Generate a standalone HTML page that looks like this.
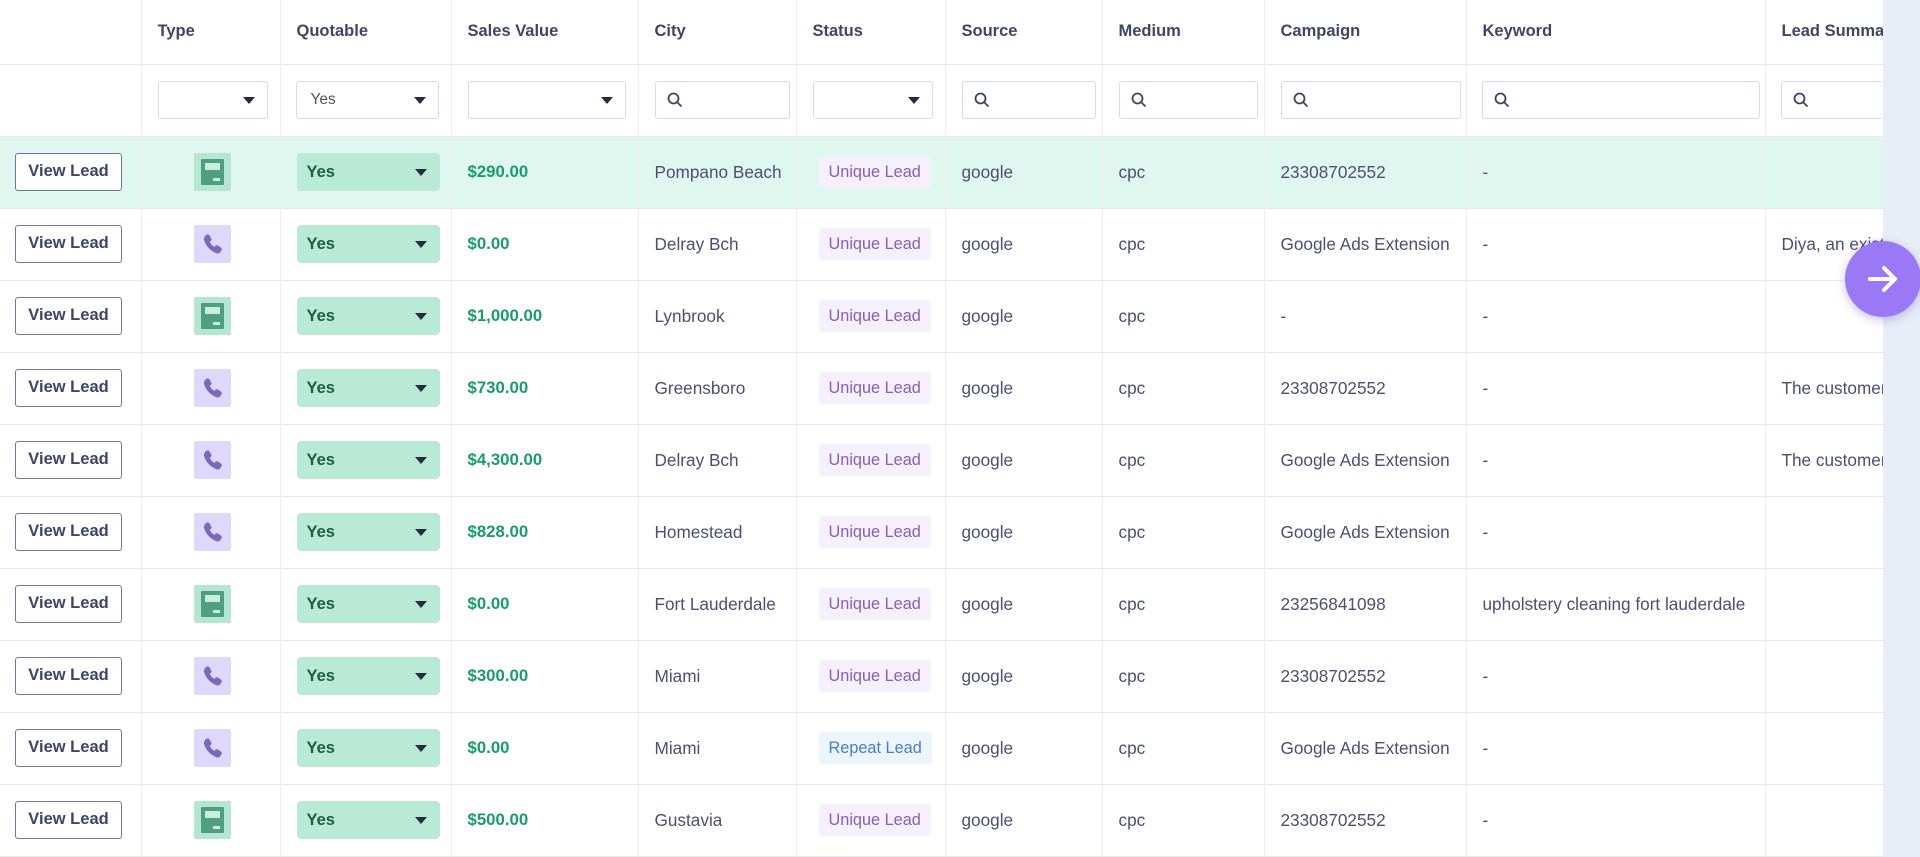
<!DOCTYPE html>
<html><head><meta charset="utf-8"><style>
*{box-sizing:border-box;margin:0;padding:0}
html,body{width:1920px;height:857px;overflow:hidden;background:#fff;font-family:"Liberation Sans",sans-serif}
.strip{position:absolute;left:1883px;top:0;width:37px;height:857px;background:#e7eef7}
table{position:absolute;left:0;top:0;border-collapse:collapse;table-layout:fixed;width:1883px}
td,th{border-bottom:1px solid #e6e9f0;border-right:1px solid #eceef3;padding:0 0 0 16px;text-align:left;white-space:nowrap;overflow:hidden;font-size:17.2px;color:#4a5072;vertical-align:middle}
th{height:64px;font-weight:bold;color:#3f4566;font-size:16.5px}
tr.f td{height:72px}
tr.r td{height:72px}
tr.hl td{background:#e0f7f0}
td.c0,th.c0{padding:0;box-shadow:6px 0 8px -6px rgba(0,0,0,.08)}
.vl{display:block;margin-left:15px;width:107px;height:38px;border:1.5px solid #6f7796;border-radius:3px;font-weight:bold;font-size:16.5px;color:#3d4466;text-align:center;line-height:35px;background:#fff}
.sel{height:38px;border:1.5px solid #d5daea;border-radius:3px;position:relative;background:#fff;font-size:15.5px;color:#555;line-height:35px;padding-left:14px}
.sel:after{content:"";position:absolute;right:12px;top:15px;border-left:6px solid transparent;border-right:6px solid transparent;border-top:7px solid #262a40}
.srch{height:38px;border:1.5px solid #d5daea;border-radius:3px;position:relative;background:#fff}
.srch svg{position:absolute;left:11px;top:10px}
.ysel{width:143px;height:38px;background:#b8ead6;border-radius:4px;position:relative;font-weight:bold;color:#1d5e45;font-size:16.5px;line-height:38px;padding-left:10px}
.ysel:after{content:"";position:absolute;right:13px;top:16px;border-left:6px solid transparent;border-right:6px solid transparent;border-top:7px solid #262a40}
.ic{display:block;margin-left:52px;width:37px;height:38px;border-radius:2px;position:relative}
.form{background:#b4e6d2}
.form i{position:absolute;left:7px;top:6px;width:23px;height:26px;background:#4f9e80;border-radius:1px}
.form i:before{content:"";position:absolute;left:4px;top:4px;width:15px;height:7px;background:#c8eedd}
.form i:after{content:"";position:absolute;left:12px;top:19px;width:7px;height:2.5px;background:#c8eedd}
.ph{background:#ddd8fc}
.ph svg{position:absolute;left:6px;top:7px}
.money{color:#1a9b68;font-weight:bold;font-size:16.8px}
.bd{display:inline-block;height:32px;line-height:32px;padding:0 10px;border-radius:3px;background:#f5f0fb;color:#8560b2;font-size:16.3px;margin-left:6px}
.bd.rp{background:#ecf4fc;color:#4b7db9}
.arrow{position:absolute;left:1845px;top:241px;width:76px;height:76px;border-radius:50%;background:#9b78f6;box-shadow:0 3px 10px rgba(80,60,160,.3)}
.arrow svg{position:absolute;left:21px;top:21px}
</style></head><body>
<div class="strip"></div>
<table>
<colgroup><col style="width:141px"><col style="width:139px"><col style="width:171px"><col style="width:187px"><col style="width:158px"><col style="width:149px"><col style="width:157px"><col style="width:162px"><col style="width:202px"><col style="width:299px"><col style="width:118px"></colgroup>
<tr><th class="c0"></th><th>Type</th><th>Quotable</th><th>Sales Value</th><th>City</th><th>Status</th><th>Source</th><th>Medium</th><th>Campaign</th><th>Keyword</th><th>Lead Summary</th></tr>
<tr class="f"><td class="c0"></td>
<td style="padding-left:16px;padding-right:12px"><div class="sel"></div></td>
<td style="padding-left:15px;padding-right:12px"><div class="sel">Yes</div></td>
<td style="padding-left:16px;padding-right:12px"><div class="sel"></div></td>
<td style="padding-left:16px;padding-right:6px"><div class="srch"><svg width="16" height="16" viewBox="0 0 16 16"><circle cx="6.5" cy="6.5" r="5" fill="none" stroke="#3d4466" stroke-width="1.8"/><path d="M10 10l4.5 4.5" stroke="#3d4466" stroke-width="1.8"/></svg></div></td>
<td style="padding-left:16px;padding-right:12px"><div class="sel"></div></td>
<td style="padding-left:16px;padding-right:6px"><div class="srch"><svg width="16" height="16" viewBox="0 0 16 16"><circle cx="6.5" cy="6.5" r="5" fill="none" stroke="#3d4466" stroke-width="1.8"/><path d="M10 10l4.5 4.5" stroke="#3d4466" stroke-width="1.8"/></svg></div></td>
<td style="padding-left:16px;padding-right:6px"><div class="srch"><svg width="16" height="16" viewBox="0 0 16 16"><circle cx="6.5" cy="6.5" r="5" fill="none" stroke="#3d4466" stroke-width="1.8"/><path d="M10 10l4.5 4.5" stroke="#3d4466" stroke-width="1.8"/></svg></div></td>
<td style="padding-left:16px;padding-right:5px"><div class="srch"><svg width="16" height="16" viewBox="0 0 16 16"><circle cx="6.5" cy="6.5" r="5" fill="none" stroke="#3d4466" stroke-width="1.8"/><path d="M10 10l4.5 4.5" stroke="#3d4466" stroke-width="1.8"/></svg></div></td>
<td style="padding-left:15px;padding-right:5px"><div class="srch"><svg width="16" height="16" viewBox="0 0 16 16"><circle cx="6.5" cy="6.5" r="5" fill="none" stroke="#3d4466" stroke-width="1.8"/><path d="M10 10l4.5 4.5" stroke="#3d4466" stroke-width="1.8"/></svg></div></td>
<td style="padding-left:15px;padding-right:0"><div class="srch" style="border-right:none"><svg width="16" height="16" viewBox="0 0 16 16"><circle cx="6.5" cy="6.5" r="5" fill="none" stroke="#3d4466" stroke-width="1.8"/><path d="M10 10l4.5 4.5" stroke="#3d4466" stroke-width="1.8"/></svg></div></td>
</tr>
<tr class="r hl"><td class="c0"><span class="vl">View Lead</span></td><td style="padding:0"><span class="ic form"><i></i></span></td><td><div class="ysel">Yes</div></td><td class="money">$290.00</td><td>Pompano Beach</td><td><span class="bd">Unique Lead</span></td><td>google</td><td>cpc</td><td>23308702552</td><td>-</td><td></td></tr>
<tr class="r"><td class="c0"><span class="vl">View Lead</span></td><td style="padding:0"><span class="ic ph"><svg width="25" height="25" viewBox="0 0 24 24"><path d="M6.6 2.5c.8-.5 1.8-.2 2.3.6l1.9 3.1c.4.7.3 1.6-.3 2.2l-1.2 1.1c.9 2 2.5 3.7 4.5 4.8l1.2-1.1c.6-.6 1.5-.6 2.2-.2l3 2c.8.5 1 1.6.5 2.4l-1.2 1.8c-.8 1.2-2.3 1.7-3.6 1.2C10.2 18.3 5.7 13.7 3.9 7.7 3.5 6.3 4.1 4.8 5.3 3.4z" fill="#7a68b8"/></svg></span></td><td><div class="ysel">Yes</div></td><td class="money">$0.00</td><td>Delray Bch</td><td><span class="bd">Unique Lead</span></td><td>google</td><td>cpc</td><td>Google Ads Extension</td><td>-</td><td>Diya, an existing</td></tr>
<tr class="r"><td class="c0"><span class="vl">View Lead</span></td><td style="padding:0"><span class="ic form"><i></i></span></td><td><div class="ysel">Yes</div></td><td class="money">$1,000.00</td><td>Lynbrook</td><td><span class="bd">Unique Lead</span></td><td>google</td><td>cpc</td><td>-</td><td>-</td><td></td></tr>
<tr class="r"><td class="c0"><span class="vl">View Lead</span></td><td style="padding:0"><span class="ic ph"><svg width="25" height="25" viewBox="0 0 24 24"><path d="M6.6 2.5c.8-.5 1.8-.2 2.3.6l1.9 3.1c.4.7.3 1.6-.3 2.2l-1.2 1.1c.9 2 2.5 3.7 4.5 4.8l1.2-1.1c.6-.6 1.5-.6 2.2-.2l3 2c.8.5 1 1.6.5 2.4l-1.2 1.8c-.8 1.2-2.3 1.7-3.6 1.2C10.2 18.3 5.7 13.7 3.9 7.7 3.5 6.3 4.1 4.8 5.3 3.4z" fill="#7a68b8"/></svg></span></td><td><div class="ysel">Yes</div></td><td class="money">$730.00</td><td>Greensboro</td><td><span class="bd">Unique Lead</span></td><td>google</td><td>cpc</td><td>23308702552</td><td>-</td><td>The customer</td></tr>
<tr class="r"><td class="c0"><span class="vl">View Lead</span></td><td style="padding:0"><span class="ic ph"><svg width="25" height="25" viewBox="0 0 24 24"><path d="M6.6 2.5c.8-.5 1.8-.2 2.3.6l1.9 3.1c.4.7.3 1.6-.3 2.2l-1.2 1.1c.9 2 2.5 3.7 4.5 4.8l1.2-1.1c.6-.6 1.5-.6 2.2-.2l3 2c.8.5 1 1.6.5 2.4l-1.2 1.8c-.8 1.2-2.3 1.7-3.6 1.2C10.2 18.3 5.7 13.7 3.9 7.7 3.5 6.3 4.1 4.8 5.3 3.4z" fill="#7a68b8"/></svg></span></td><td><div class="ysel">Yes</div></td><td class="money">$4,300.00</td><td>Delray Bch</td><td><span class="bd">Unique Lead</span></td><td>google</td><td>cpc</td><td>Google Ads Extension</td><td>-</td><td>The customer</td></tr>
<tr class="r"><td class="c0"><span class="vl">View Lead</span></td><td style="padding:0"><span class="ic ph"><svg width="25" height="25" viewBox="0 0 24 24"><path d="M6.6 2.5c.8-.5 1.8-.2 2.3.6l1.9 3.1c.4.7.3 1.6-.3 2.2l-1.2 1.1c.9 2 2.5 3.7 4.5 4.8l1.2-1.1c.6-.6 1.5-.6 2.2-.2l3 2c.8.5 1 1.6.5 2.4l-1.2 1.8c-.8 1.2-2.3 1.7-3.6 1.2C10.2 18.3 5.7 13.7 3.9 7.7 3.5 6.3 4.1 4.8 5.3 3.4z" fill="#7a68b8"/></svg></span></td><td><div class="ysel">Yes</div></td><td class="money">$828.00</td><td>Homestead</td><td><span class="bd">Unique Lead</span></td><td>google</td><td>cpc</td><td>Google Ads Extension</td><td>-</td><td></td></tr>
<tr class="r"><td class="c0"><span class="vl">View Lead</span></td><td style="padding:0"><span class="ic form"><i></i></span></td><td><div class="ysel">Yes</div></td><td class="money">$0.00</td><td>Fort Lauderdale</td><td><span class="bd">Unique Lead</span></td><td>google</td><td>cpc</td><td>23256841098</td><td>upholstery cleaning fort lauderdale</td><td></td></tr>
<tr class="r"><td class="c0"><span class="vl">View Lead</span></td><td style="padding:0"><span class="ic ph"><svg width="25" height="25" viewBox="0 0 24 24"><path d="M6.6 2.5c.8-.5 1.8-.2 2.3.6l1.9 3.1c.4.7.3 1.6-.3 2.2l-1.2 1.1c.9 2 2.5 3.7 4.5 4.8l1.2-1.1c.6-.6 1.5-.6 2.2-.2l3 2c.8.5 1 1.6.5 2.4l-1.2 1.8c-.8 1.2-2.3 1.7-3.6 1.2C10.2 18.3 5.7 13.7 3.9 7.7 3.5 6.3 4.1 4.8 5.3 3.4z" fill="#7a68b8"/></svg></span></td><td><div class="ysel">Yes</div></td><td class="money">$300.00</td><td>Miami</td><td><span class="bd">Unique Lead</span></td><td>google</td><td>cpc</td><td>23308702552</td><td>-</td><td></td></tr>
<tr class="r"><td class="c0"><span class="vl">View Lead</span></td><td style="padding:0"><span class="ic ph"><svg width="25" height="25" viewBox="0 0 24 24"><path d="M6.6 2.5c.8-.5 1.8-.2 2.3.6l1.9 3.1c.4.7.3 1.6-.3 2.2l-1.2 1.1c.9 2 2.5 3.7 4.5 4.8l1.2-1.1c.6-.6 1.5-.6 2.2-.2l3 2c.8.5 1 1.6.5 2.4l-1.2 1.8c-.8 1.2-2.3 1.7-3.6 1.2C10.2 18.3 5.7 13.7 3.9 7.7 3.5 6.3 4.1 4.8 5.3 3.4z" fill="#7a68b8"/></svg></span></td><td><div class="ysel">Yes</div></td><td class="money">$0.00</td><td>Miami</td><td><span class="bd rp">Repeat Lead</span></td><td>google</td><td>cpc</td><td>Google Ads Extension</td><td>-</td><td></td></tr>
<tr class="r"><td class="c0"><span class="vl">View Lead</span></td><td style="padding:0"><span class="ic form"><i></i></span></td><td><div class="ysel">Yes</div></td><td class="money">$500.00</td><td>Gustavia</td><td><span class="bd">Unique Lead</span></td><td>google</td><td>cpc</td><td>23308702552</td><td>-</td><td></td></tr>
</table>
<div class="arrow"><svg width="34" height="34" viewBox="0 0 34 34"><path d="M4 17h25M18 6l11 11-11 11" fill="none" stroke="#fff" stroke-width="4" stroke-linecap="round" stroke-linejoin="round"/></svg></div>
</body></html>
